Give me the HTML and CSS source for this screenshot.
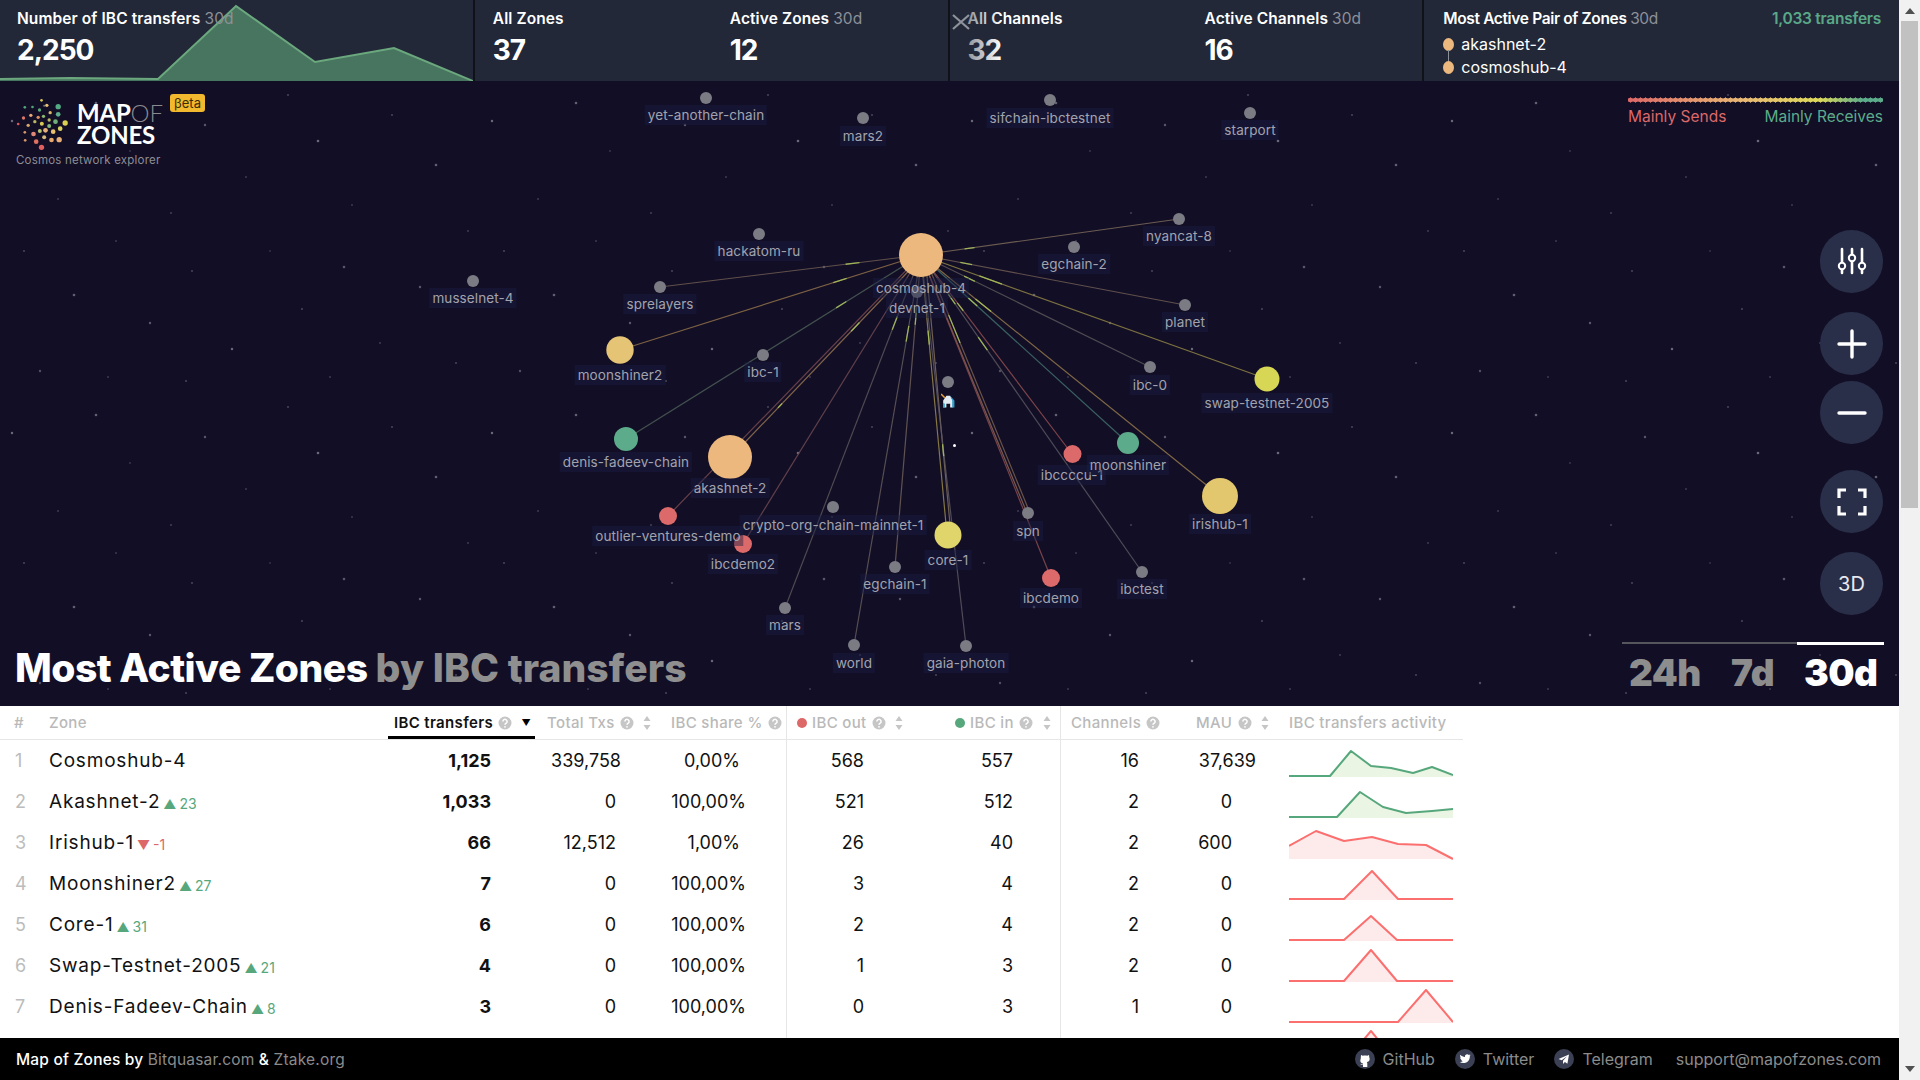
FILE: index.html
```html
<!DOCTYPE html>
<html lang="en">
<head>
<meta charset="utf-8">
<title>Map of Zones</title>
<link rel="stylesheet" href="styles.css">
</head>
<body>
<svg class="defs" width="0" height="0" aria-hidden="true">
  <symbol id="q" viewBox="0 0 14 14"><circle cx="7" cy="7" r="6.5" fill="currentColor"/><path d="M4.9 5.5a2.1 2.1 0 1 1 3.3 1.7c-.8.5-1.2.9-1.2 1.6" fill="none" stroke="#fff" stroke-width="1.5"/><circle cx="7" cy="10.8" r=".9" fill="#fff"/></symbol>
  <symbol id="sort" viewBox="0 0 8 14"><path d="M4 0l3.5 5h-7zM4 14l3.5-5h-7z" fill="currentColor"/></symbol>
</svg>
<div class="app">
  <div class="main">
    <header class="top">
      <section class="panel panel-chart">
        <svg class="bigchart" viewBox="0 0 474 81" preserveAspectRatio="none"><polygon points="0,79 70,78 158,79 236,6 315,62 394,48 473,81 0,81" fill="#48755f"/><polyline points="0,79 70,78 158,79 236,6 315,62 394,48 473,81" fill="none" stroke="#6ba87e" stroke-width="2"/></svg>
        <div class="stat"><div class="stat-t">Number of IBC transfers <span class="per">30d</span></div><div class="stat-v">2,250</div></div>
      </section>
      <section class="panel">
        <div class="stat"><div class="stat-t">All Zones</div><div class="stat-v">37</div></div>
        <div class="stat"><div class="stat-t">Active Zones <span class="per">30d</span></div><div class="stat-v">12</div></div>
      </section>
      <section class="panel">
        <div class="fade"></div>
        <svg class="close" viewBox="0 0 20 16"><path d="M2 1l16 14M18 1L2 15" fill="none" stroke="#8f939c" stroke-width="2.2"/></svg>
        <div class="stat"><div class="stat-t">All Channels</div><div class="stat-v">32</div></div>
        <div class="stat"><div class="stat-t">Active Channels <span class="per">30d</span></div><div class="stat-v">16</div></div>
      </section>
      <section class="panel panel-pair">
        <div class="pair-head"><div class="stat-t">Most Active Pair of Zones <span class="per">30d</span></div><div class="pair-count">1,033 transfers</div></div>
        <div class="pair-row"><i class="pair-dot"></i>akashnet-2</div>
        <div class="pair-row"><i class="pair-dot pair-dot-last"></i>cosmoshub-4</div>
      </section>
    </header>

    <section class="map">
      <svg class="canvas" viewBox="0 81 1899 625" width="1899" height="625">
        <defs>
          <pattern id="stars" width="480" height="312" patternUnits="userSpaceOnUse" x="0" y="81">
            <g fill="#fff" opacity=".75">
              <circle cx="12" cy="40" r="1.2" opacity=".5"/><circle cx="58" cy="118" r="1" opacity=".25"/><circle cx="96" cy="22" r="1.3" opacity=".45"/><circle cx="130" cy="70" r="1" opacity=".2"/><circle cx="171" cy="132" r=".9" opacity=".3"/><circle cx="205" cy="44" r="1.2" opacity=".4"/><circle cx="246" cy="96" r="1" opacity=".25"/><circle cx="288" cy="14" r="1" opacity=".3"/><circle cx="318" cy="60" r="1.3" opacity=".5"/><circle cx="352" cy="124" r=".9" opacity=".25"/><circle cx="392" cy="34" r="1" opacity=".3"/><circle cx="436" cy="84" r="1.3" opacity=".45"/><circle cx="468" cy="150" r="1" opacity=".25"/>
              <circle cx="24" cy="170" r="1" opacity=".3"/><circle cx="74" cy="214" r="1.3" opacity=".45"/><circle cx="116" cy="160" r=".9" opacity=".25"/><circle cx="150" cy="242" r="1.2" opacity=".4"/><circle cx="192" cy="190" r="1" opacity=".3"/><circle cx="232" cy="268" r="1.2" opacity=".5"/><circle cx="270" cy="170" r=".9" opacity=".2"/><circle cx="302" cy="228" r="1" opacity=".3"/><circle cx="344" cy="186" r="1.3" opacity=".4"/><circle cx="380" cy="262" r="1" opacity=".25"/><circle cx="420" cy="206" r="1.2" opacity=".4"/><circle cx="456" cy="282" r="1" opacity=".3"/><circle cx="40" cy="290" r="1.2" opacity=".35"/><circle cx="108" cy="296" r=".9" opacity=".25"/><circle cx="186" cy="300" r="1" opacity=".3"/><circle cx="330" cy="296" r="1" opacity=".25"/>
            </g>
          </pattern>
        </defs>
        <rect x="0" y="81" width="1899" height="625" fill="url(#stars)"/>
        <circle cx="954.5" cy="445.5" r="1.5" fill="#fff"/>
        <g class="edges">
          <line x1="921" y1="255" x2="660" y2="287" stroke="#6e5c50"/>
          <line x1="921" y1="255" x2="620" y2="350" stroke="#8f7048"/>
          <line x1="921" y1="255" x2="626" y2="439" stroke="#4c5e56"/>
          <line x1="921" y1="255" x2="668" y2="516" stroke="#75484e"/>
          <line x1="923" y1="256" x2="731" y2="457" stroke="#94724f"/>
          <line x1="921" y1="255" x2="743" y2="544" stroke="#6f4a50"/>
          <line x1="921" y1="255" x2="785" y2="608" stroke="#5a5458"/>
          <line x1="921" y1="255" x2="854" y2="645" stroke="#635a5a"/>
          <line x1="921" y1="255" x2="895" y2="567" stroke="#6d5f58"/>
          <line x1="921" y1="255" x2="947" y2="535" stroke="#9a8a4c"/>
          <line x1="925" y1="255" x2="951" y2="535" stroke="#80705a"/>
          <line x1="921" y1="255" x2="966" y2="646" stroke="#5c5660"/>
          <line x1="921" y1="255" x2="1027" y2="513" stroke="#8a6656"/>
          <line x1="924" y1="255" x2="1030" y2="513" stroke="#7b604e"/>
          <line x1="921" y1="255" x2="1051" y2="578" stroke="#8a4d50"/>
          <line x1="921" y1="255" x2="1142" y2="572" stroke="#5a5660"/>
          <line x1="921" y1="255" x2="1072" y2="454" stroke="#8f4e50"/>
          <line x1="921" y1="255" x2="1128" y2="443" stroke="#41706a"/>
          <line x1="921" y1="255" x2="1220" y2="496" stroke="#93774a"/>
          <line x1="921" y1="255" x2="1150" y2="367" stroke="#5b5558"/>
          <line x1="921" y1="255" x2="1267" y2="379" stroke="#8f8344"/>
          <line x1="921" y1="255" x2="1185" y2="305" stroke="#6e5c52"/>
          <line x1="921" y1="255" x2="1179" y2="219" stroke="#7b6a58"/>
        </g>
        <g class="sparks">
          <line x1="921" y1="255" x2="660" y2="287" stroke-dasharray="0 62 14 2000"/>
          <line x1="921" y1="255" x2="620" y2="350" stroke-dasharray="0 78 14 2000"/>
          <line x1="921" y1="255" x2="626" y2="439" stroke-dasharray="0 88 12 2000"/>
          <line x1="923" y1="256" x2="731" y2="457" stroke-dasharray="0 92 12 100 6 2000"/>
          <line x1="921" y1="255" x2="785" y2="608" stroke-dasharray="0 66 14 2000"/>
          <line x1="921" y1="255" x2="854" y2="645" stroke-dasharray="0 72 16 2000"/>
          <line x1="921" y1="255" x2="895" y2="567" stroke-dasharray="0 58 12 2000"/>
          <line x1="921" y1="255" x2="947" y2="535" stroke-dasharray="0 76 14 2000"/>
          <line x1="925" y1="255" x2="951" y2="535" stroke-dasharray="0 190 12 2000"/>
          <line x1="924" y1="255" x2="1030" y2="513" stroke-dasharray="0 65 30 2000"/>
          <line x1="921" y1="255" x2="1142" y2="572" stroke-dasharray="0 48 12 40 16 2000"/>
          <line x1="921" y1="255" x2="1072" y2="454" stroke-dasharray="0 60 10 2000"/>
          <line x1="921" y1="255" x2="1128" y2="443" stroke-dasharray="0 64 12 2000"/>
          <line x1="921" y1="255" x2="1220" y2="496" stroke-dasharray="0 70 20 2000"/>
          <line x1="921" y1="255" x2="1267" y2="379" stroke-dasharray="0 62 24 2000"/>
          <line x1="921" y1="255" x2="1150" y2="367" stroke-dasharray="0 48 12 2000"/>
          <line x1="921" y1="255" x2="1185" y2="305" stroke-dasharray="0 40 12 2000"/>
          <line x1="921" y1="255" x2="1179" y2="219" stroke-dasharray="0 44 10 2000"/>
        </g>
        <g class="idle">
          <circle cx="706" cy="98" r="6"/><circle cx="863" cy="118" r="6"/><circle cx="1050" cy="100" r="6"/><circle cx="1250" cy="113" r="6"/><circle cx="473" cy="281" r="6"/><circle cx="759" cy="234" r="6"/><circle cx="660" cy="287" r="6"/><circle cx="917" cy="292" r="6"/><circle cx="763" cy="355" r="6"/><circle cx="948" cy="382" r="6"/><circle cx="1179" cy="219" r="6"/><circle cx="1074" cy="247" r="6"/><circle cx="1185" cy="305" r="6"/><circle cx="1150" cy="367" r="6"/><circle cx="833" cy="507" r="6"/><circle cx="1028" cy="513" r="6"/><circle cx="1142" cy="572" r="6"/><circle cx="895" cy="567" r="6"/><circle cx="785" cy="608" r="6"/><circle cx="854" cy="645" r="6"/><circle cx="966" cy="646" r="6"/>
        </g>
        <g>
          <circle cx="921" cy="255" r="22" fill="#ecb87e"/>
          <circle cx="730" cy="457" r="22" fill="#ecb87e"/>
          <circle cx="620" cy="350" r="13.7" fill="#e5c476"/>
          <circle cx="626" cy="439" r="12" fill="#5cab8b"/>
          <circle cx="1267" cy="379" r="12.5" fill="#d7d755"/>
          <circle cx="1128" cy="443" r="11" fill="#5cab8b"/>
          <circle cx="1072.500" cy="454" r="9" fill="#dc6a6a"/>
          <circle cx="1220" cy="496" r="18" fill="#e2c76e"/>
          <circle cx="668" cy="516" r="9" fill="#dc6a6a"/>
          <circle cx="743" cy="544" r="9" fill="#dc6a6a"/>
          <circle cx="948" cy="535" r="13.5" fill="#e0d56a"/>
          <circle cx="1051" cy="578" r="9" fill="#dc6a6a"/>
        </g>
      </svg>

      <span class="lab" style="left:706px;top:34px">yet-another-chain</span>
      <span class="lab" style="left:863px;top:55px">mars2</span>
      <span class="lab" style="left:1050px;top:37px">sifchain-ibctestnet</span>
      <span class="lab" style="left:1250px;top:49px">starport</span>
      <span class="lab" style="left:473px;top:217px">musselnet-4</span>
      <span class="lab" style="left:759px;top:170px">hackatom-ru</span>
      <span class="lab" style="left:660px;top:223px">sprelayers</span>
      <span class="lab" style="left:917px;top:227px">devnet-1</span>
      <span class="lab" style="left:921px;top:207px">cosmoshub-4</span>
      <span class="lab" style="left:620px;top:294px">moonshiner2</span>
      <span class="lab" style="left:763px;top:291px">ibc-1</span>
      <span class="lab" style="left:626px;top:381px">denis-fadeev-chain</span>
      <span class="lab" style="left:730px;top:407px">akashnet-2</span>
      <span class="lab" style="left:1179px;top:155px">nyancat-8</span>
      <span class="lab" style="left:1074px;top:183px">egchain-2</span>
      <span class="lab" style="left:1185px;top:241px">planet</span>
      <span class="lab" style="left:1150px;top:304px">ibc-0</span>
      <span class="lab" style="left:1267px;top:322px">swap-testnet-2005</span>
      <span class="lab" style="left:1072px;top:394px">ibccccu-1</span>
      <span class="lab" style="left:1128px;top:384px">moonshiner</span>
      <span class="lab" style="left:1220px;top:443px">irishub-1</span>
      <span class="lab" style="left:743px;top:483px">ibcdemo2</span>
      <span class="lab" style="left:668px;top:455px">outlier-ventures-demo</span>
      <span class="lab" style="left:833px;top:444px">crypto-org-chain-mainnet-1</span>
      <span class="lab" style="left:948px;top:479px">core-1</span>
      <span class="lab" style="left:1028px;top:450px">spn</span>
      <span class="lab" style="left:1051px;top:517px">ibcdemo</span>
      <span class="lab" style="left:1142px;top:508px">ibctest</span>
      <span class="lab" style="left:895px;top:503px">egchain-1</span>
      <span class="lab" style="left:785px;top:544px">mars</span>
      <span class="lab" style="left:854px;top:582px">world</span>
      <span class="lab" style="left:966px;top:582px">gaia-photon</span>
      <svg class="unicorn" viewBox="0 0 13 14"><path d="M0 1l3.500 3.500" stroke="#e8a23c" stroke-width="1.4"/><path d="M2 13.500V7l3-4.500h3.500L11 7v6.500H8.500V10H5v3.500z" fill="#e3ebf3"/><path d="M8.500 2.500L12.500 7v6.500H10.500V7z" fill="#2a9fd0"/><path d="M2 13.500V9l1.500 1v3.500z" fill="#2a9fd0"/></svg>

      <div class="logo">
        <div class="logo-main">
          <svg class="logo-dots" viewBox="40 40 170 180">
            <circle cx="122" cy="59" r="4" fill="#d6c850"/><circle cx="138" cy="74" r="5" fill="#e8c070"/><circle cx="130" cy="75" r="3" fill="#777"/><circle cx="72" cy="80" r="4" fill="#4fa878"/><circle cx="95" cy="79" r="4" fill="#4fa878"/><circle cx="172" cy="78" r="8" fill="#52ab82"/><circle cx="116" cy="88" r="5" fill="#5aa878"/><circle cx="148" cy="96" r="5" fill="#d8b868"/><circle cx="172" cy="101" r="7" fill="#5cab8a"/><circle cx="68" cy="112" r="5" fill="#e07868"/><circle cx="90" cy="104" r="5" fill="#e8a878"/><circle cx="112" cy="110" r="5" fill="#e09060"/><circle cx="128" cy="107" r="5" fill="#8ab870"/><circle cx="52" cy="130" r="4" fill="#dc5858"/><circle cx="82" cy="134" r="5" fill="#d8a868"/><circle cx="102" cy="123" r="5" fill="#b8b860"/><circle cx="123" cy="129" r="6" fill="#d8c858"/><circle cx="145" cy="118" r="5" fill="#b8b860"/><circle cx="164" cy="123" r="7" fill="#70b078"/><circle cx="193" cy="127" r="8" fill="#d8d050"/><circle cx="72" cy="155" r="4" fill="#d89868"/><circle cx="98" cy="160" r="7" fill="#e08878"/><circle cx="117" cy="151" r="6" fill="#b8c070"/><circle cx="134" cy="149" r="7" fill="#e8b078"/><circle cx="145" cy="136" r="6" fill="#88b878"/><circle cx="157" cy="153" r="7" fill="#e8c070"/><circle cx="178" cy="144" r="7" fill="#d8d060"/><circle cx="73" cy="179" r="4" fill="#d89868"/><circle cx="106" cy="183" r="7" fill="#e07060"/><circle cx="130" cy="170" r="6" fill="#d8b878"/><circle cx="152" cy="178" r="7" fill="#e8a868"/><circle cx="175" cy="177" r="8" fill="#e8b078"/><circle cx="122" cy="200" r="8" fill="#e06060"/>
          </svg>
          <div class="logo-word"><div>MAP<span class="logo-of">OF</span></div><div>ZONES</div></div>
          <span class="beta">βeta</span>
        </div>
        <div class="logo-tag">Cosmos network explorer</div>
      </div>

      <div class="legend">
        <div class="legend-bar"></div>
        <div class="legend-labels"><span class="send">Mainly Sends</span><span class="recv">Mainly Receives</span></div>
      </div>

      <div class="tools">
        <button class="tool"><svg viewBox="0 0 32 32" width="32" height="32"><path d="M6 3v24M16 3v24M26 3v24" stroke="#fff" stroke-width="2.6" stroke-linecap="round"/><circle cx="6" cy="20" r="3.2" fill="#2a2f49" stroke="#fff" stroke-width="2"/><circle cx="16" cy="12" r="3.2" fill="#2a2f49" stroke="#fff" stroke-width="2"/><circle cx="26" cy="20" r="3.2" fill="#2a2f49" stroke="#fff" stroke-width="2"/></svg></button>
        <button class="tool tool-b"><svg viewBox="0 0 32 32" width="32" height="32"><path d="M3 16h26M16 3v26" stroke="#fff" stroke-width="3.4" stroke-linecap="round"/></svg></button>
        <button class="tool tool-c"><svg viewBox="0 0 32 32" width="32" height="32"><path d="M3 16h26" stroke="#fff" stroke-width="3.4" stroke-linecap="round"/></svg></button>
        <button class="tool tool-d"><svg viewBox="0 0 32 32" width="32" height="32"><path d="M10 4H3v8M22 4h7v8M3 20v8h7M29 20v8h-7" fill="none" stroke="#fff" stroke-width="3.2"/></svg></button>
        <button class="tool tool-b tool-3d">3D</button>
      </div>

      <h1 class="title">Most Active Zones <span class="title-dim">by IBC transfers</span></h1>

      <div class="periods">
        <span class="period">24h</span><span class="period period-7">7d</span><span class="period period-on">30d</span>
      </div>
    </section>

    <section class="tablewrap">
      <table class="zones">
        <colgroup><col class="c1"><col class="c2"><col class="c3"><col class="c4"><col class="c5"><col class="c6"><col class="c7"><col class="c8"><col class="c9"><col class="c10"></colgroup>
        <thead>
          <tr>
            <th class="hn">#</th>
            <th>Zone</th>
            <th class="active">IBC transfers <svg class="q"><use href="#q"/></svg> <span class="sortdown">▼</span></th>
            <th class="h-total">Total Txs <svg class="q"><use href="#q"/></svg> <svg class="s"><use href="#sort"/></svg></th>
            <th class="sep h-share">IBC share % <svg class="q"><use href="#q"/></svg></th>
            <th><i class="hd hd-r"></i>IBC out <svg class="q"><use href="#q"/></svg> <svg class="s"><use href="#sort"/></svg></th>
            <th class="sep"><i class="hd hd-g"></i>IBC in <svg class="q"><use href="#q"/></svg> <svg class="s"><use href="#sort"/></svg></th>
            <th>Channels <svg class="q"><use href="#q"/></svg></th>
            <th>MAU <svg class="q"><use href="#q"/></svg> <svg class="s"><use href="#sort"/></svg></th>
            <th>IBC transfers activity</th>
          </tr>
        </thead>
        <tbody>
          <tr>
            <td class="rank">1</td><td class="name">Cosmoshub-4</td><td class="num b">1,125</td><td class="num"><span class="over5">339,758</span></td><td class="num sep share"><span class="in6">0,00%</span></td><td class="num out">568</td><td class="num sep in">557</td><td class="num ch">16</td><td class="num mau"><span class="over24">37,639</span></td>
            <td class="act"><svg class="spark up" viewBox="0 0 164 41"><polygon points="0,36 41,36 62,11 82,26 102,28 124,33 143,27 164,35 164,37 0,37"/><polyline points="0,36 41,36 62,11 82,26 102,28 124,33 143,27 164,35"/></svg></td>
          </tr>
          <tr>
            <td class="rank">2</td><td class="name">Akashnet-2<span class="d">▲</span><span class="dv">23</span></td><td class="num b">1,033</td><td class="num">0</td><td class="num sep share">100,00%</td><td class="num out">521</td><td class="num sep in">512</td><td class="num ch">2</td><td class="num mau">0</td>
            <td class="act"><svg class="spark up" viewBox="0 0 164 41"><polygon points="0,36 48,36 71,11 94,26 117,32 143,30 164,28 164,37 0,37"/><polyline points="0,36 48,36 71,11 94,26 117,32 143,30 164,28"/></svg></td>
          </tr>
          <tr>
            <td class="rank">3</td><td class="name">Irishub-1<span class="d dn">▼</span><span class="dv dn">-1</span></td><td class="num b">66</td><td class="num">12,512</td><td class="num sep share"><span class="in6">1,00%</span></td><td class="num out">26</td><td class="num sep in">40</td><td class="num ch">2</td><td class="num mau">600</td>
            <td class="act"><svg class="spark down" viewBox="0 0 164 41"><polygon points="0,24 27,9 55,19 83,15 109,22 137,23 164,37 0,37"/><polyline points="0,24 27,9 55,19 83,15 109,22 137,23 164,37"/></svg></td>
          </tr>
          <tr>
            <td class="rank">4</td><td class="name">Moonshiner2<span class="d">▲</span><span class="dv">27</span></td><td class="num b">7</td><td class="num">0</td><td class="num sep share">100,00%</td><td class="num out">3</td><td class="num sep in">4</td><td class="num ch">2</td><td class="num mau">0</td>
            <td class="act"><svg class="spark down" viewBox="0 0 164 41"><polygon points="0,36 55,36 83,8 109,36 164,36 164,37 0,37"/><polyline points="0,36 55,36 83,8 109,36 164,36"/></svg></td>
          </tr>
          <tr>
            <td class="rank">5</td><td class="name">Core-1<span class="d">▲</span><span class="dv">31</span></td><td class="num b">6</td><td class="num">0</td><td class="num sep share">100,00%</td><td class="num out">2</td><td class="num sep in">4</td><td class="num ch">2</td><td class="num mau">0</td>
            <td class="act"><svg class="spark down" viewBox="0 0 164 41"><polygon points="0,36 55,36 82,12 108,36 164,36 164,37 0,37"/><polyline points="0,36 55,36 82,12 108,36 164,36"/></svg></td>
          </tr>
          <tr>
            <td class="rank">6</td><td class="name">Swap-Testnet-2005<span class="d">▲</span><span class="dv">21</span></td><td class="num b">4</td><td class="num">0</td><td class="num sep share">100,00%</td><td class="num out">1</td><td class="num sep in">3</td><td class="num ch">2</td><td class="num mau">0</td>
            <td class="act"><svg class="spark down" viewBox="0 0 164 41"><polygon points="0,36 55,36 82,5 108,36 164,36 164,37 0,37"/><polyline points="0,36 55,36 82,5 108,36 164,36"/></svg></td>
          </tr>
          <tr>
            <td class="rank">7</td><td class="name">Denis-Fadeev-Chain<span class="d">▲</span><span class="dv">8</span></td><td class="num b">3</td><td class="num">0</td><td class="num sep share">100,00%</td><td class="num out">0</td><td class="num sep in">3</td><td class="num ch">1</td><td class="num mau">0</td>
            <td class="act"><svg class="spark down" viewBox="0 0 164 41"><polygon points="0,36 109,36 137,4 164,36 164,37 0,37"/><polyline points="0,36 109,36 137,4 164,36"/></svg></td>
          </tr>
          <tr>
            <td class="rank"></td><td class="name"></td><td class="num b"></td><td class="num"></td><td class="num sep share"></td><td class="num out"></td><td class="num sep in"></td><td class="num ch"></td><td class="num mau"></td>
            <td class="act"><svg class="spark down" viewBox="0 0 164 41"><polygon points="0,36 55,36 82,4 108,36 164,36 164,37 0,37"/><polyline points="0,36 55,36 82,4 108,36 164,36"/></svg></td>
          </tr>
        </tbody>
      </table>
    </section>

    <footer class="foot">
      <div class="foot-l">Map of Zones by <a>Bitquasar.com</a> &amp; <a>Ztake.org</a></div>
      <nav class="foot-r">
        <a class="fl"><svg class="fi" viewBox="0 0 20 20"><circle cx="10" cy="10" r="10" fill="#3b4054"/><path d="M6 6l1.800.8c1.400-.4 3-.4 4.400 0L14 6l.3 2.500c.6 1 .5 2.700-.3 3.500-.6.600-1.400.900-2.200 1 .4.400.5.900.5 1.500V18H8v-2c-1.300.3-2.200 0-2.800-1.200.6.300 1.700 1 2.800.6v-1c-.8-.1-1.500-.4-2-1-.8-.8-.9-2.500-.3-3.500z" fill="#fff"/></svg>GitHub</a>
        <a class="fl"><svg class="fi" viewBox="0 0 20 20"><circle cx="10" cy="10" r="10" fill="#3b4054"/><path d="M15.500 6.300c-.4.200-.8.300-1.300.4.500-.3.800-.7 1-1.200-.4.300-.9.400-1.400.5a2.200 2.200 0 0 0-3.800 2c-1.800-.1-3.500-1-4.600-2.300-.6 1-.3 2.300.7 3-.4 0-.7-.1-1-.3 0 1.100.8 2 1.800 2.200-.3.100-.7.100-1 0 .3.900 1.100 1.500 2.100 1.500-1 .8-2.200 1.100-3.300 1 3.700 2.300 10.200.6 10.200-6.200.4-.2.800-.6 1.600-1.600z" fill="#fff"/></svg>Twitter</a>
        <a class="fl"><svg class="fi" viewBox="0 0 20 20"><circle cx="10" cy="10" r="10" fill="#3b4054"/><path d="M15 5.500L4.500 10l3.200 1.200L13 7.300l-4 4.500v3.200l1.900-2.100 2.500 1.800z" fill="#fff"/></svg>Telegram</a>
        <a class="fl fl-mail">support@mapofzones.com</a>
      </nav>
    </footer>
  </div>

  <aside class="scroll">
    <span class="sb-up"></span>
    <span class="sb-thumb"></span>
    <span class="sb-space"></span>
    <span class="sb-down"></span>
  </aside>
</div>
</body>
</html>
```

FILE: styles.css
```css
* { box-sizing: border-box; }
html, body { margin: 0; height: 100%; }
body { font-family: Inter, "Noto Sans", "Liberation Sans", sans-serif; background: #fff; overflow: hidden; }
.defs { position: absolute; }
.app { display: flex; width: 1920px; height: 1080px; }
.main { width: 1899px; display: flex; flex-direction: column; }

/* scrollbar */
.scroll { width: 21px; background: #f1f1f1; display: flex; flex-direction: column; align-items: center; }
.sb-up { margin-top: 8px; border: 5px solid transparent; border-top: 0; border-bottom: 6px solid #505050; }
.sb-thumb { width: 17px; height: 487px; margin-top: 7px; background: #c1c1c1; }
.sb-space { flex: 1; }
.sb-down { margin-bottom: 8px; border: 5px solid transparent; border-bottom: 0; border-top: 6px solid #505050; }

/* top stats */
.top { height: 81px; display: flex; background: #222838; flex: none; }
.panel { position: relative; width: 25%; flex: none; display: flex; padding-left: 18px; border-right: 2px solid #10121a; overflow: hidden; }
.panel:last-child { border-right: 0; }
.panel-chart { padding-left: 17px; }
.bigchart { position: absolute; left: 0; top: 0; width: 474px; height: 81px; }
.stat { position: relative; width: 237px; padding-top: 10px; flex: none; }
.panel-chart .stat { width: auto; }
.stat-t { font-size: 15.5px; line-height: 18px; font-weight: 600; color: #fff; letter-spacing: .1px; white-space: nowrap; }
.per { font-weight: 400; color: #8d9098; }
.stat-v { font-size: 28px; line-height: 34px; margin-top: 5px; font-weight: 700; color: #fff; letter-spacing: -1px; }
.fade { position: absolute; left: 0; top: 0; width: 52px; height: 81px; background: linear-gradient(90deg, rgba(34,40,56,.75), rgba(34,40,56,0)); z-index: 1; }
.close { position: absolute; left: 1px; top: 14px; width: 20px; height: 16px; z-index: 2; }
.panel-pair { flex-direction: column; padding: 10px 18px 0 19px; }
.panel-pair .stat-t { letter-spacing: -.35px; }
.pair-head { display: flex; justify-content: space-between; margin-bottom: 5px; }
.pair-count { font-size: 15.500px; line-height: 18px; font-weight: 600; letter-spacing: -.25px; color: #5aa888; }
.pair-row { position: relative; display: flex; align-items: center; gap: 7px; font-size: 16px; line-height: 23px; color: #fff; }
.pair-dot { position: relative; width: 11px; height: 13px; border-radius: 50%; background: #ecb87e; flex: none; }
.pair-dot::after { content: ""; position: absolute; left: 5px; top: 12px; width: 1px; height: 12px; background: #8b8f98; }
.pair-dot-last::after { display: none; }

/* map */
.map { position: relative; height: 625px; flex: none; background: #120e26; overflow: hidden; }
.canvas { position: absolute; left: 0; top: 0; }
.edges line { stroke-width: 1.2; opacity: .85; }
.sparks line { stroke: #a9c45c; stroke-width: 1.3; fill: none; opacity: .85; }
.idle circle { fill: #7b7b84; }
.lab { position: absolute; transform: translate(-50%, -50%); padding: 1px 3px; font-size: 13.5px; line-height: 18px; letter-spacing: .1px; color: #a3a3ae; background: rgba(27,32,68,.45); white-space: nowrap; }
.unicorn { position: absolute; left: 941px; top: 312px; width: 14px; height: 15px; }

.logo { position: absolute; left: 14px; top: 13px; }
.logo-main { position: relative; display: flex; align-items: center; width: 190px; gap: 6px; }
.logo-dots { width: 57px; height: 60px; flex: none; }
.logo-word { font-family: Lato, sans-serif; font-size: 24px; line-height: 22px; font-weight: 700; color: #fff; letter-spacing: -.2px; }
.logo-of { font-weight: 300; color: #8a8a8f; }
.beta { position: absolute; left: 156px; top: 0; padding: 0 4px; background: #f2b92e; border-radius: 3px; font-size: 13px; line-height: 18px; color: #3a2c05; }
.logo-tag { margin: -1px 0 0 2px; font-size: 11.5px; line-height: 14px; letter-spacing: .2px; color: #8d8d94; white-space: nowrap; }

.legend { position: absolute; right: 16px; top: 16px; width: 255px; }
.legend-bar { height: 6px; background: linear-gradient(90deg, #dc6868, #e8b874 45%, #dcd85a 75%, #5cab8a 92%); -webkit-mask: radial-gradient(circle at 50% 50%, #000 2.4px, transparent 2.7px) 0 0 / 5px 6px; mask: radial-gradient(circle at 50% 50%, #000 2.4px, transparent 2.7px) 0 0 / 5px 6px; }
.legend-labels { display: flex; justify-content: space-between; margin-top: 4px; font-size: 15.5px; line-height: 20px; }
.send { color: #dc6868; }
.recv { color: #5cab8a; }

.tools { position: absolute; right: 16px; top: 149px; display: flex; flex-direction: column; }
.tool { width: 63px; height: 63px; padding: 0; border: 0; border-radius: 50%; background: #2a2f49; display: flex; align-items: center; justify-content: center; color: #e8e8ee; font-family: Inter, sans-serif; font-size: 20px; }
.tool-b { margin-top: 19px; }
.tool-c { margin-top: 6px; }
.tool-d { margin-top: 26px; }

.title { position: absolute; left: 15px; top: 564px; margin: 0; font-size: 39px; line-height: 46px; font-weight: 800; color: #fff; letter-spacing: -.5px; white-space: nowrap; }
.title-dim { color: #8f8f8f; letter-spacing: .1px; }

.periods { position: absolute; left: 1622px; top: 561px; width: 262px; display: flex; border-top: 2px solid #55555c; padding-top: 7px; }
.period { font-size: 37px; line-height: 44px; font-weight: 900; letter-spacing: -.5px; color: #8d8d8d; padding-left: 7px; width: 102px; }
.period-7 { width: 73px; }
.period-on { position: relative; color: #fff; width: 87px; }
.period-on::before { content: ""; position: absolute; left: 0; right: 0; top: -9px; height: 3px; background: #fff; }

/* table */
.tablewrap { flex: 1; min-height: 0; overflow: hidden; background: #fff; }
.zones { width: 1463px; table-layout: fixed; border-collapse: separate; border-spacing: 0; }
.c1 { width: 40px; } .c2 { width: 348px; } .c3 { width: 147px; } .c4 { width: 125px; } .c5 { width: 127px; }
.c6 { width: 158px; } .c7 { width: 116px; } .c8 { width: 125px; } .c9 { width: 93px; } .c10 { width: 184px; }
th { height: 34px; padding: 0 0 0 10px; text-align: left; font-size: 15px; letter-spacing: .35px; font-weight: 500; color: #b9b9b9; border-bottom: 1px solid #e6e6e6; white-space: nowrap; vertical-align: middle; }
th:nth-child(2) { padding-left: 9px; }
th.hn { padding-left: 14px; }
th.active { color: #111; font-weight: 600; padding-left: 6px; box-shadow: inset 0 -3px 0 #000; }
th.h-total { padding-left: 12px; }
th.h-share { padding-left: 11px; }
.sep { border-right: 1px solid #e6e6e6; }
.q { width: 14px; height: 14px; vertical-align: -2px; margin-left: 1px; color: #c6c6c6; }
.s { width: 8px; height: 14px; vertical-align: -2px; margin-left: 5px; color: #c6c6c6; }
.sortdown { font-size: 9px; margin-left: 5px; color: #000; vertical-align: 2px; }
.hd { display: inline-block; width: 10px; height: 10px; border-radius: 50%; margin-right: 5px; }
.hd-r { background: #dc6868; }
.hd-g { background: #57a77c; }
td { height: 41px; padding: 0; font-size: 18px; color: #111; white-space: nowrap; }
.rank { padding-left: 15px; color: #bcbcbc; }
.name { padding-left: 9px; font-size: 19px; letter-spacing: .8px; }
.d { font-size: 13px; color: #57a77c; margin-left: 3px; letter-spacing: 0; vertical-align: -1px; }
.dv { font-size: 14px; color: #57a77c; margin-left: 3px; letter-spacing: 0; vertical-align: -1px; }
.d.dn, .dv.dn { color: #dc6868; }
.num { text-align: right; padding-right: 44px; }
.num.b { font-weight: 700; padding-right: 44px; }
.share { padding-right: 40px; }
.out { padding-right: 81px; }
.in { padding-right: 47px; }
.ch { padding-right: 47px; }
.mau { padding-right: 47px; }
.over5 { margin-right: -5px; }
.over24 { margin-right: -24px; }
.in6 { margin-right: 6px; }
.act { padding: 0 0 0 10px; vertical-align: top; }
.spark { display: block; width: 164px; height: 41px; }
.spark polyline { fill: none; stroke-width: 2; stroke-linejoin: round; }
.up polygon { fill: #ebf5e3; }
.up polyline { stroke: #57a77c; }
.down polygon { fill: #fdebec; }
.down polyline { stroke: #fb6f6f; }

/* footer */
.foot { height: 42px; flex: none; background: #000; display: flex; align-items: center; justify-content: space-between; padding: 0 18px 0 16px; font-size: 16px; }
.foot-l { color: #fff; font-weight: 500; font-size: 15.5px; letter-spacing: .2px; }
.foot-l a { color: #8b8b8b; font-weight: 400; }
.foot-r { display: flex; gap: 20px; }
.fl { display: flex; align-items: center; gap: 8px; color: #8b8b8b; }
.fl-mail { margin-left: 3px; }
.fi { width: 20px; height: 20px; }
```
